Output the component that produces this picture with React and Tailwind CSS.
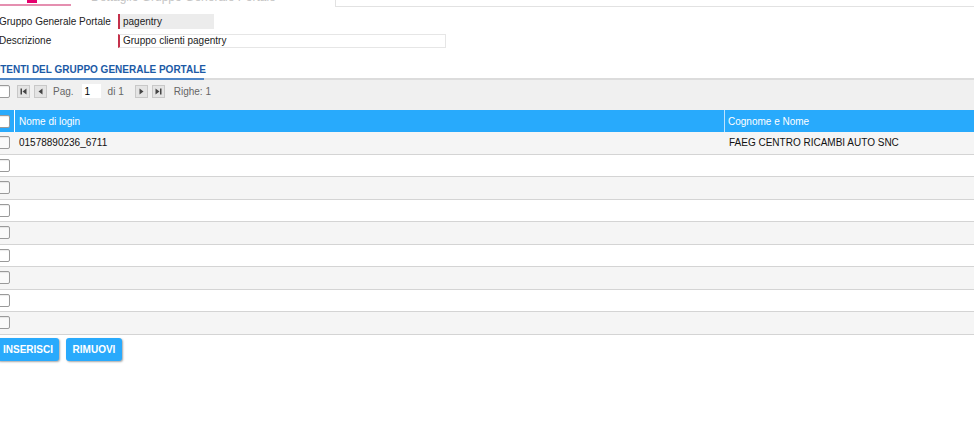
import React from 'react';

const Check = ({ white }) => (
  <div className={`w-[13px] h-[13px] border border-[#9a9a9a] rounded-[2px] ${white ? 'bg-white' : 'bg-[#fafafa]'} shadow-[inset_0_1px_1px_rgba(0,0,0,0.08)]`} />
);

const NavBtn = ({ dir, edge }) => (
  <div className="w-[13px] h-[13px] border border-[#c8c8c8] bg-[#e4e4e4] flex items-center justify-center">
    <svg width="9" height="9" viewBox="0 0 9 9">
      {dir === 'left' ? (
        <>
          {edge && <rect x="1.5" y="1.5" width="1.5" height="6" fill="#444" />}
          <path d={edge ? 'M7.5 1.5 L3.5 4.5 L7.5 7.5 Z' : 'M6.5 1.5 L2.5 4.5 L6.5 7.5 Z'} fill="#444" />
        </>
      ) : (
        <>
          <path d={edge ? 'M1.5 1.5 L5.5 4.5 L1.5 7.5 Z' : 'M2.5 1.5 L6.5 4.5 L2.5 7.5 Z'} fill="#444" />
          {edge && <rect x="6" y="1.5" width="1.5" height="6" fill="#444" />}
        </>
      )}
    </svg>
  </div>
);

const rows = [
  { login: '01578890236_6711', nome: 'FAEG CENTRO RICAMBI AUTO SNC' },
  {}, {}, {}, {}, {}, {}, {}, {},
];

export default function App() {
  return (
    <div className="w-[974px] h-[422px] overflow-hidden bg-white text-[10px] text-[#222] font-['Liberation_Sans',Arial,sans-serif]">
      {/* tab strip (scrolled) */}
      <div className="h-[7px] flex overflow-hidden">
        <div className="w-[71px] h-[6px] border-b-2 border-[#e58fb0] flex justify-center">
          <div className="w-[10px] h-[3px] bg-[#e6006e] ml-[-8px]" />
        </div>
        <div className="w-[264px] pl-[20px] -mt-[12px] text-[12px] text-[#c4c4c4] whitespace-nowrap overflow-hidden">Dettaglio Gruppo Generale Portale</div>
        <div className="flex-1 h-[7px] border-l border-b border-[#e2e2e2]" />
      </div>

      {/* form */}
      <div className="mt-[6px] flex flex-col gap-[4px] -ml-[1px]">
        <div className="flex items-center">
          <div className="w-[119px] pt-[1px]">Gruppo Generale Portale</div>
          <div className="w-[96px] h-[15px] bg-[#ececec] border-l-2 border-[#c4314b] pl-[3px] leading-[15px]">pagentry</div>
        </div>
        <div className="flex items-center">
          <div className="w-[119px]">Descrizione</div>
          <div className="w-[328px] h-[14px] bg-white border border-[#e6e6e6] border-l-2 border-l-[#c4314b] pl-[3px] leading-[12px]">Gruppo clienti pagentry</div>
        </div>
      </div>

      {/* section tab */}
      <div className="mt-[14px] border-b-2 border-[#dcdcdc]">
        <div className="w-[204px] border-b-2 border-[#4f86c6] -mb-[2px] pb-[1px]">
          <div className="-ml-[7px] font-bold text-[#1c5aa6] whitespace-nowrap">UTENTI DEL GRUPPO GENERALE PORTALE</div>
        </div>
      </div>

      {/* toolbar */}
      <div className="h-[30px] bg-[#f0f0f0] -ml-[3px] pt-[4px]">
        <div className="flex items-center h-[14px]">
          <Check white />
          <div className="ml-[7px] flex gap-[4px]">
            <NavBtn dir="left" edge />
            <NavBtn dir="left" />
          </div>
          <span className="ml-[6px] text-[#666]">Pag.</span>
          <div className="ml-[8px] w-[19px] h-[14px] bg-white text-black pl-[3px] leading-[16px]">1</div>
          <span className="ml-[7px] text-[#666]">di 1</span>
          <div className="ml-[11px] flex gap-[4px]">
            <NavBtn dir="right" />
            <NavBtn dir="right" edge />
          </div>
          <span className="ml-[9px] text-[#666]">Righe: 1</span>
        </div>
      </div>

      {/* table */}
      <div className="-ml-[3px]">
        <div className="h-[22px] bg-[#28aafc] flex items-center text-white">
          <div className="w-[18px] h-full flex items-center border-r border-white"><Check white /></div>
          <div className="w-[710px] h-full flex items-center pl-[4px] border-r border-[#bfe3fd]">Nome di login</div>
          <div className="flex-1 pl-[3px]">Cognome e Nome</div>
        </div>
        {rows.map((r, i) => (
          <div key={i} className={`h-[22.5px] flex items-center border-b border-[#d4d4d4] ${i % 2 === 0 ? 'bg-[#f5f5f5]' : 'bg-white'}`}>
            <div className="w-[18px] flex items-center"><Check white={i % 2 === 1} /></div>
            <div className="w-[710px] pl-[4px] text-[#111]">{r.login}</div>
            <div className="flex-1 pl-[4px] text-[#111]">{r.nome}</div>
          </div>
        ))}
      </div>

      {/* buttons */}
      <div className="mt-[3px] flex gap-[7px] -ml-[3px]">
        <button className="h-[23px] w-[62px] rounded-[3px] bg-[#29aafc] text-white font-bold text-[10px] shadow-[1px_1px_2px_rgba(0,0,0,0.35)]">INSERISCI</button>
        <button className="h-[23px] w-[56px] rounded-[3px] bg-[#29aafc] text-white font-bold text-[10px] shadow-[1px_1px_2px_rgba(0,0,0,0.35)]">RIMUOVI</button>
      </div>
    </div>
  );
}
